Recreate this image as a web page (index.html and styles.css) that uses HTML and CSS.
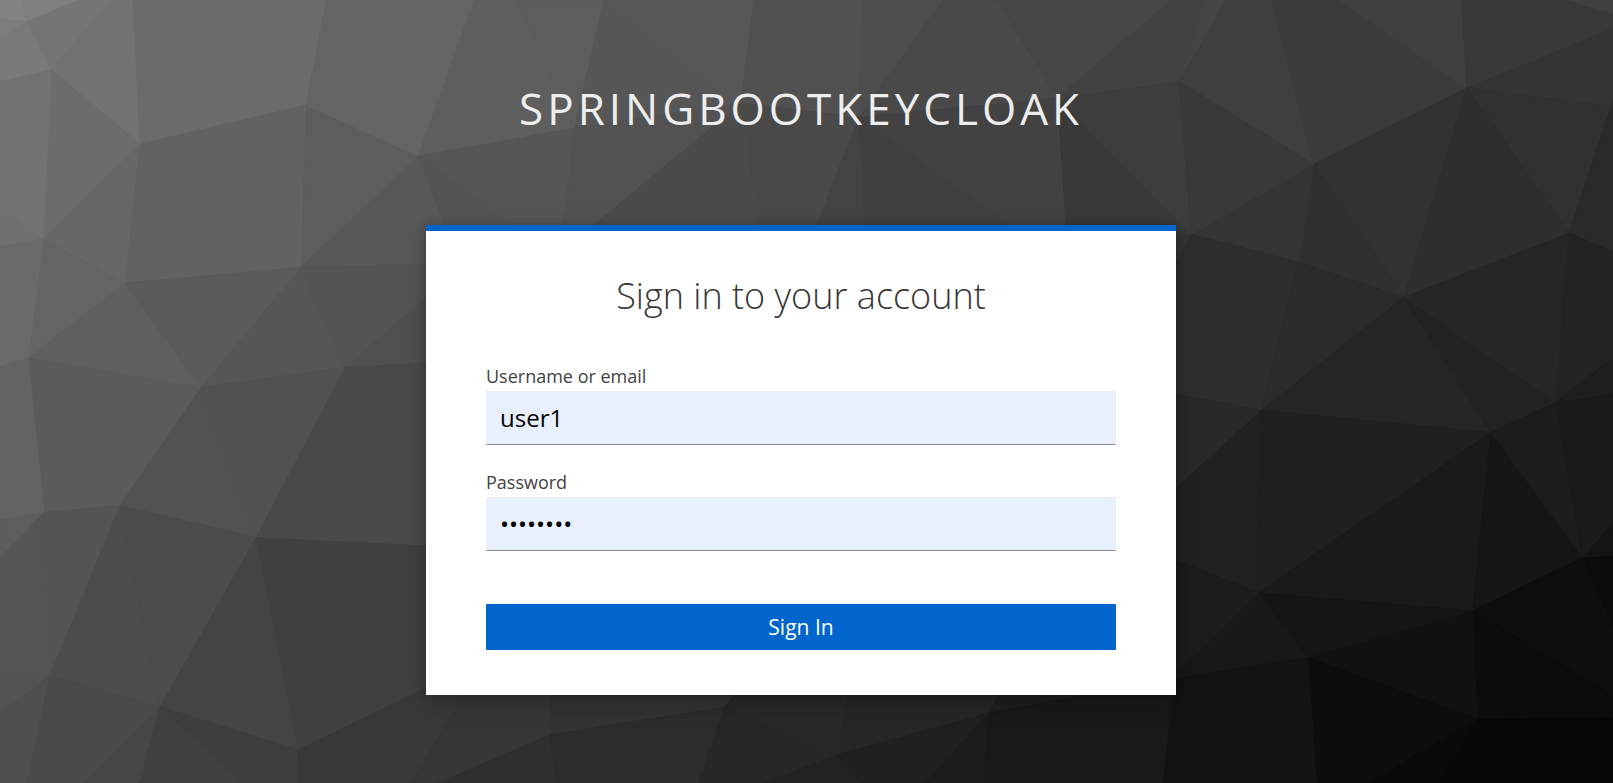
FILE: index.html
```html
<!DOCTYPE html>
<html lang="en">
<head>
<meta charset="utf-8">
<meta name="viewport" content="width=device-width, initial-scale=1">
<title>Sign in to springbootkeycloak</title>
<link rel="stylesheet" href="styles.css">
</head>
<body>
<svg class="backdrop" viewBox="0 0 1612 782" preserveAspectRatio="xMinYMin slice" aria-hidden="true">
<!-- left side -->
<polygon color="#838383" points="0,0 23,0 27,22 0,19"/>
<polygon color="#7f7f7f" points="23,0 80,0 27,22"/>
<polygon color="#7d7d7d" points="0,19 27,22 0,38"/>
<polygon color="#797979" points="0,38 27,22 51,70 0,82"/>
<polygon color="#757575" points="27,22 80,0 112,0 51,70"/>
<polygon color="#727272" points="112,0 133,0 140,144 51,70"/>
<polygon color="#6b6b6b" points="133,0 326,0 306,105 140,144"/>
<polygon color="#6c6c6c" points="51,70 140,144 43,239"/>
<polygon color="#727272" points="0,82 51,70 43,239 0,208"/>
<polygon color="#707070" points="0,208 43,239 0,246"/>
<polygon color="#676767" points="140,144 125,283 43,239"/>
<polygon color="#626262" points="140,144 306,105 301,267 125,283"/>
<polygon color="#5d5d5d" points="306,105 418,156 301,267"/>
<polygon color="#646464" points="326,0 474,0 418,156 306,105"/>
<polygon color="#646464" points="43,239 125,283 28,358"/>
<polygon color="#6a6a6a" points="0,246 43,239 28,358 0,366"/>
<polygon color="#5f5f5f" points="125,283 201,387 28,358"/>
<polygon color="#5b5b5b" points="125,283 301,267 201,387"/>
<polygon color="#565656" points="301,267 345,367 201,387"/>
<polygon color="#585858" points="418,156 448,235 426,264 301,267"/>
<polygon color="#545454" points="301,267 440,264 440,285 345,367"/>
<polygon color="#505050" points="345,367 440,285 440,362"/>
<polygon color="#515151" points="345,367 256,537 201,387"/>
<polygon color="#5b5b5b" points="28,358 201,387 120,505 44,512"/>
<polygon color="#636363" points="0,366 28,358 44,512 0,519"/>
<polygon color="#5d5d5d" points="0,519 44,512 0,557"/>
<polygon color="#525252" points="201,387 256,537 120,505"/>
<polygon color="#4a4a4a" points="345,367 440,362 440,546 256,537"/>
<polygon color="#545454" points="44,512 120,505 50,675"/>
<polygon color="#555555" points="0,557 44,512 50,675 0,676"/>
<polygon color="#535353" points="0,676 50,675 0,712"/>
<polygon color="#4f4f4f" points="0,712 50,675 27,783 0,783"/>
<polygon color="#4d4d4d" points="120,505 160,706 50,675"/>
<polygon color="#4c4c4c" points="120,505 256,537 160,706"/>
<polygon color="#444444" points="256,537 298,749 160,706"/>
<polygon color="#404040" points="256,537 440,546 440,680 298,749"/>
<polygon color="#4a4a4a" points="50,675 160,706 83,783 27,783"/>
<polygon color="#464646" points="160,706 139,783 83,783"/>
<polygon color="#404040" points="160,706 245,783 139,783"/>
<polygon color="#3e3e3e" points="160,706 298,749 299,783 245,783"/>
<polygon color="#393939" points="298,749 440,680 470,684 410,783 299,783"/>
<!-- top -->
<polygon color="#5e5e5e" points="474,0 515,0 574,128 418,156"/>
<polygon color="#5d5d5d" points="515,0 603,0 574,128"/>
<polygon color="#565656" points="603,0 740,103 574,128"/>
<polygon color="#575757" points="603,0 753,0 740,103"/>
<polygon color="#515151" points="753,0 861,0 858,117 740,103"/>
<polygon color="#4e4e4e" points="861,0 942,0 858,117"/>
<polygon color="#494949" points="942,0 996,0 1056,98 858,117"/>
<polygon color="#464646" points="996,0 1170,0 1056,98"/>
<polygon color="#424242" points="1170,0 1203,0 1178,82 1056,98"/>
<polygon color="#444444" points="1203,0 1225,0 1178,82"/>
<polygon color="#545454" points="418,156 515,225 515,240 448,235"/>
<polygon color="#565656" points="418,156 574,128 561,240 536,240"/>
<polygon color="#525252" points="574,128 740,103 575,240 561,240"/>
<polygon color="#4b4b4b" points="740,103 761,240 575,240"/>
<polygon color="#494949" points="740,103 858,117 810,240 761,240"/>
<polygon color="#434343" points="858,117 865,240 810,240"/>
<polygon color="#404040" points="858,117 1030,240 865,240"/>
<polygon color="#424242" points="858,117 1056,98 1066,240 1030,240"/>
<polygon color="#393939" points="1056,98 1190,234 1160,240 1066,240"/>
<polygon color="#3d3d3d" points="1056,98 1178,82 1190,234"/>
<!-- right side -->
<polygon color="#3f3f3f" points="1225,0 1270,0 1312,164 1178,82"/>
<polygon color="#3b3b3b" points="1270,0 1336,0 1465,88 1312,164"/>
<polygon color="#3f3f3f" points="1336,0 1460,0 1465,88"/>
<polygon color="#393939" points="1460,0 1565,0 1613,14 1613,28 1465,88"/>
<polygon color="#404040" points="1565,0 1613,0 1613,14"/>
<polygon color="#343434" points="1465,88 1613,28 1613,95 1609,106"/>
<polygon color="#313131" points="1465,88 1609,106 1567,233"/>
<polygon color="#2a2a2a" points="1609,106 1613,95 1613,252 1567,233"/>
<polygon color="#323232" points="1312,164 1465,88 1402,297"/>
<polygon color="#2e2e2e" points="1465,88 1567,233 1402,297"/>
<polygon color="#303030" points="1312,164 1402,297 1297,262"/>
<polygon color="#343434" points="1312,164 1297,262 1190,234"/>
<polygon color="#393939" points="1178,82 1312,164 1190,234"/>
<polygon color="#343434" points="1190,234 1160,240 1160,290"/>
<polygon color="#2e2e2e" points="1190,234 1297,262 1260,410 1160,391 1160,290"/>
<polygon color="#2b2b2b" points="1297,262 1402,297 1260,410"/>
<polygon color="#252525" points="1402,297 1489,432 1260,410"/>
<polygon color="#222222" points="1402,297 1554,402 1489,432"/>
<polygon color="#262626" points="1402,297 1567,233 1554,402"/>
<polygon color="#232323" points="1567,233 1613,252 1613,356 1554,402"/>
<polygon color="#1e1e1e" points="1554,402 1613,356 1613,394"/>
<polygon color="#292929" points="1160,391 1260,410 1160,501"/>
<polygon color="#212121" points="1260,410 1257,592 1160,554 1160,501"/>
<polygon color="#202020" points="1260,410 1489,432 1257,592"/>
<polygon color="#1a1a1a" points="1489,432 1471,610 1257,592"/>
<polygon color="#161616" points="1489,432 1581,557 1471,610"/>
<polygon color="#1c1c1c" points="1489,432 1554,402 1581,557"/>
<polygon color="#1a1a1a" points="1554,402 1613,394 1613,521 1581,557"/>
<polygon color="#141414" points="1581,557 1613,521 1613,556"/>
<polygon color="#0b0b0b" points="1581,557 1613,556 1613,632"/>
<polygon color="#0e0e0e" points="1471,610 1581,557 1613,632 1613,697"/>
<polygon color="#0c0c0c" points="1471,610 1613,697 1613,717 1475,718"/>
<polygon color="#060606" points="1475,718 1613,717 1613,783 1580,783"/>
<polygon color="#080808" points="1475,718 1580,783 1434,783"/>
<polygon color="#0a0a0a" points="1475,718 1434,783 1364,783"/>
<polygon color="#111111" points="1471,610 1475,718 1306,657"/>
<polygon color="#0d0d0d" points="1306,657 1475,718 1364,783 1315,783"/>
<polygon color="#151515" points="1257,592 1471,610 1306,657"/>
<polygon color="#181818" points="1257,592 1306,657 1160,680"/>
<polygon color="#1c1c1c" points="1160,554 1257,592 1160,686"/>
<polygon color="#131313" points="1306,657 1315,783 1161,783 1172,678"/>
<!-- bottom -->
<polygon color="#363636" points="470,684 549,684 549,734 436,783 410,783"/>
<polygon color="#2f2f2f" points="549,734 557,783 436,783"/>
<polygon color="#333333" points="549,684 742,684 724,706 549,734"/>
<polygon color="#2c2c2c" points="549,734 724,706 698,783 557,783"/>
<polygon color="#292929" points="742,684 849,684 836,754 724,706"/>
<polygon color="#272727" points="724,706 836,754 761,783 698,783"/>
<polygon color="#262626" points="849,684 1003,684 988,712 836,754"/>
<polygon color="#222222" points="836,754 862,783 761,783"/>
<polygon color="#202020" points="836,754 988,712 924,783 862,783"/>
<polygon color="#1c1c1c" points="988,712 983,783 924,783"/>
<polygon color="#1f1f1f" points="1003,684 1140,684 988,712"/>
<polygon color="#191919" points="988,712 1140,684 1172,678 1161,783 983,783"/>
</svg>
<div class="page">
<header class="realm">springbootkeycloak</header>
<main class="card">
<h1 class="title">Sign in to your account</h1>
<form class="form">
<div class="field">
<label class="label" for="username">Username or email</label>
<input class="input" id="username" name="username" type="text" value="user1" autocomplete="off">
</div>
<div class="field">
<label class="label" for="password">Password</label>
<input class="input" id="password" name="password" type="password" value="password" autocomplete="off">
</div>
<button class="submit" type="submit">Sign In</button>
</form>
</main>
</div>
</body>
</html>
```

FILE: styles.css
```css
* {
  box-sizing: border-box;
}

body {
  margin: 0;
  min-height: 100vh;
  position: relative;
  background: linear-gradient(115deg, #707070, #484848 45%, #0a0a0a);
  font-family: "Open Sans", "Noto Sans", sans-serif;
  color: #363636;
}

.backdrop {
  position: absolute;
  inset: 0;
  width: 100%;
  height: 100%;
}

.backdrop polygon {
  fill: currentColor;
  stroke: currentColor;
  stroke-width: 1;
  stroke-linejoin: round;
}

.page {
  position: relative;
  display: flex;
  flex-direction: column;
  align-items: center;
  padding: 78px 11px 88px 0;
}

.realm {
  margin-bottom: 87px;
  font-size: 44px;
  line-height: 60px;
  letter-spacing: 4px;
  text-transform: uppercase;
  color: #ededed;
}

.card {
  width: 100%;
  max-width: 750px;
  padding: 41px 60px 45px;
  border-top: 6px solid #0066cc;
  background: #fff;
  box-shadow: 0 8px 24px rgba(3, 3, 3, 0.24), 0 0 8px rgba(3, 3, 3, 0.16);
}

.title {
  margin: 0 0 42px;
  font-size: 36px;
  font-weight: 300;
  line-height: 48px;
  text-align: center;
}

.form {
  display: flex;
  flex-direction: column;
}

.field {
  display: flex;
  flex-direction: column;
  margin-bottom: 23px;
}

.label {
  margin-bottom: 1px;
  font-size: 18px;
  line-height: 28px;
  color: #424242;
}

.input {
  width: 100%;
  height: 54px;
  padding: 0 13px 2px;
  border: 1px solid #ededed;
  border-bottom-color: #8a8d90;
  border-radius: 0;
  background: #e8effd;
  font: inherit;
  font-size: 24px;
  color: #030303;
}

.submit {
  height: 46px;
  margin-top: 30px;
  border: 0;
  border-radius: 1px;
  background: #0066cc;
  font: inherit;
  font-size: 21px;
  color: #fff;
}
```
